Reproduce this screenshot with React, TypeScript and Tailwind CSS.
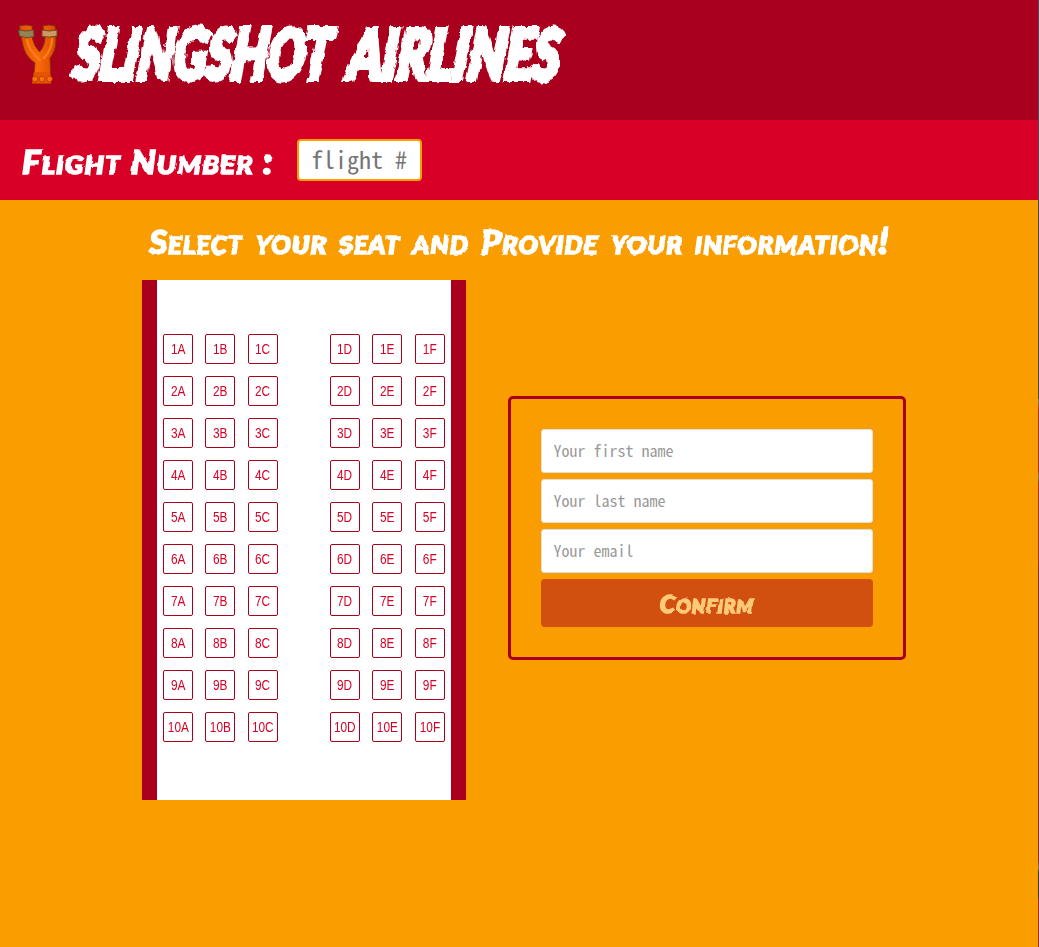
import React from "react";

const leftSeats = ["A", "B", "C"];
const rightSeats = ["D", "E", "F"];
const rows = Array.from({ length: 10 }, (_, i) => i + 1);

function Slingshot() {
  return (
    <svg className="mt-[23px] shrink-0" width="42" height="62" viewBox="0 0 42 62" aria-hidden="true">
      <defs>
        <linearGradient id="wood" x1="0" x2="1">
          <stop offset="0" stopColor="#e05200" />
          <stop offset=".5" stopColor="#f96a08" />
          <stop offset="1" stopColor="#d84c00" />
        </linearGradient>
      </defs>
      <path d="M2.500 3 Q9 1 15 3 L15.500 16 Q17 23 22.500 29 Q28 23 28 14 L26 3 Q32 1 38 3 L39 17 Q39 28 33 35 L34 60 H16 L18 40 Q7 33 5 18Z" fill="url(#wood)" stroke="#8b3508" strokeWidth="1" />
      <path d="M10 17 Q12 28 23 37 M35 16 Q35 26 27 35" fill="none" stroke="#ff7a18" strokeWidth="2.500" strokeLinecap="round" />
      <path d="M1.500 7 Q9 9 16.500 7 L17 13.500 Q10 16 2.500 13Z" fill="#978257" stroke="#62502c" />
      <path d="M25 7 Q32 9 40 7 V13 Q33 15 25 13.500Z" fill="#cc9a62" stroke="#704821" />
      <path d="M17 49 H33 L34 60.500 H15Z" fill="#e85300" />
      <g fill="#ff700e" stroke="#b23e00" strokeWidth=".8">
        <circle cx="18" cy="56" r="2.800" />
        <circle cx="25" cy="56" r="2.800" />
        <circle cx="32.500" cy="56" r="2.800" />
      </g>
    </svg>
  );
}

function Wordmark() {
  return (
    <svg width="560" height="118" viewBox="0 0 560 118" className="shrink-0">
      <defs>
        <filter id="torn" x="-5%" y="-10%" width="110%" height="120%" colorInterpolationFilters="sRGB">
          <feTurbulence type="fractalNoise" baseFrequency=".2 .1" numOctaves="2" seed="4" />
          <feDisplacementMap in="SourceGraphic" scale="6" xChannelSelector="R" yChannelSelector="G" />
        </filter>
        <filter id="marker" x="-2%" y="-10%" width="104%" height="120%" colorInterpolationFilters="sRGB">
          <feTurbulence type="fractalNoise" baseFrequency=".1" numOctaves="1" seed="8" />
          <feDisplacementMap in="SourceGraphic" scale="3.500" xChannelSelector="R" yChannelSelector="G" />
        </filter>
      </defs>
      <g filter="url(#torn)">
        <g
          transform="translate(0 79) skewX(-6)"
          fill="white"
          stroke="white"
          strokeWidth="6"
          fontFamily="Lato"
          fontWeight="900"
          fontStyle="italic"
          fontSize="69"
        >
          <text x="14" y="0" textLength="256" lengthAdjust="spacingAndGlyphs">SLINGSHOT</text>
          <text x="288" y="0" textLength="211" lengthAdjust="spacingAndGlyphs">AIRLINES</text>
        </g>
      </g>
    </svg>
  );
}

function Seat({ id }: { id: string }) {
  return (
    <button className="flex h-[30px] w-[30px] items-center justify-center rounded-[2px] border border-[#aa001e] bg-white p-0 pb-[2px] font-['Liberation_Sans',sans-serif] text-[15px] leading-none text-[#d80026] last:ml-px">
      <span className="inline-block scale-x-[0.79]">{id}</span>
    </button>
  );
}

const marker =
  "inline-block whitespace-nowrap font-['Lato',sans-serif] font-black italic tracking-[1px] [font-variant:small-caps] [-webkit-text-stroke:1.6px_currentColor] [filter:url(#marker)] ";
const input =
  "h-11 w-full rounded-[3px] border border-[#dbdfe6] bg-white px-[11.5px] pb-[3px] font-['Noto_Sans_CJK_JP',sans-serif] text-[16px] text-black outline-none [font-feature-settings:'hwid','liga'_0] [font-variant-ligatures:none] placeholder:text-[#999]";

export default function App() {
  return (
    <div className="flex h-[947px] w-[1039px] overflow-hidden">
      <div className="flex w-[1038px] flex-col bg-[#f99d00]">
        <header className="flex h-[120px] items-start bg-[#aa001e] pl-[17px]">
          <Slingshot />
          <Wordmark />
        </header>
        <section className="flex h-20 items-center bg-[#d80026]">
          <h2 className="ml-[22px] w-[275px] text-white">
            <span className={marker + "origin-left scale-x-[1.09] text-[35px]"}>
              <span className="text-[32px]">F</span>light <span className="text-[32px]">N</span>umber :
            </span>
          </h2>
          <input
            placeholder="flight #"
            className="h-[42px] w-[125px] rounded-[4px] border-2 border-[#f99d00] bg-white px-[12px] pb-[3px] font-['Noto_Sans_CJK_JP',sans-serif] text-[24px] outline-none [font-feature-settings:'hwid','liga'_0] [font-variant-ligatures:none] placeholder:text-[#757575]"
          />
        </section>
        <main>
          <h1 className="flex h-20 items-center justify-center text-white">
            <span className={marker + "scale-x-[1.03] text-[36px] [word-spacing:3px]"}>
              <span className="text-[33px]">S</span>elect your seat and <span className="text-[33px]">P</span>rovide your information!
            </span>
          </h1>
          <div className="flex items-start pl-[142px]">
            <div className="flex h-[520px] w-[324px] justify-between border-x-[15px] border-[#aa001e] bg-white px-[6px] pt-[54px]">
              {[leftSeats, rightSeats].map((group, i) => (
                <div key={i} className="flex w-[115px] flex-col gap-3">
                  {rows.map((row) => (
                    <div key={row} className="flex gap-3">
                      {group.map((letter) => <Seat key={letter} id={`${row}${letter}`} />)}
                    </div>
                  ))}
                </div>
              ))}
            </div>
            <form className="mt-[116px] ml-[42px] flex h-[264px] w-[398px] flex-col gap-[6px] rounded-[5px] border-[3px] border-[#aa001e] p-[30px]">
              <input className={input} placeholder="Your first name" />
              <input className={input} placeholder="Your last name" />
              <input className={input} placeholder="Your email" />
              <button type="button" className="h-12 w-full rounded-[4px] bg-[#d14f0f] text-[#fdca78]">
                <span className={marker + "scale-x-[1.05] text-[26px]"}>
                  <span className="text-[24px]">C</span>onfirm
                </span>
              </button>
            </form>
          </div>
        </main>
      </div>
      <div className="w-px bg-[linear-gradient(to_bottom,#4b4650_0_398px,#8c7a60_400px,#a0362a_410px_472px,#8c7a60_476px,#a0362a_484px_560px,#85333a_570px_860px,#8c7a60_868px,#3c3428_872px_896px,#993038_900px)]" />
    </div>
  );
}
